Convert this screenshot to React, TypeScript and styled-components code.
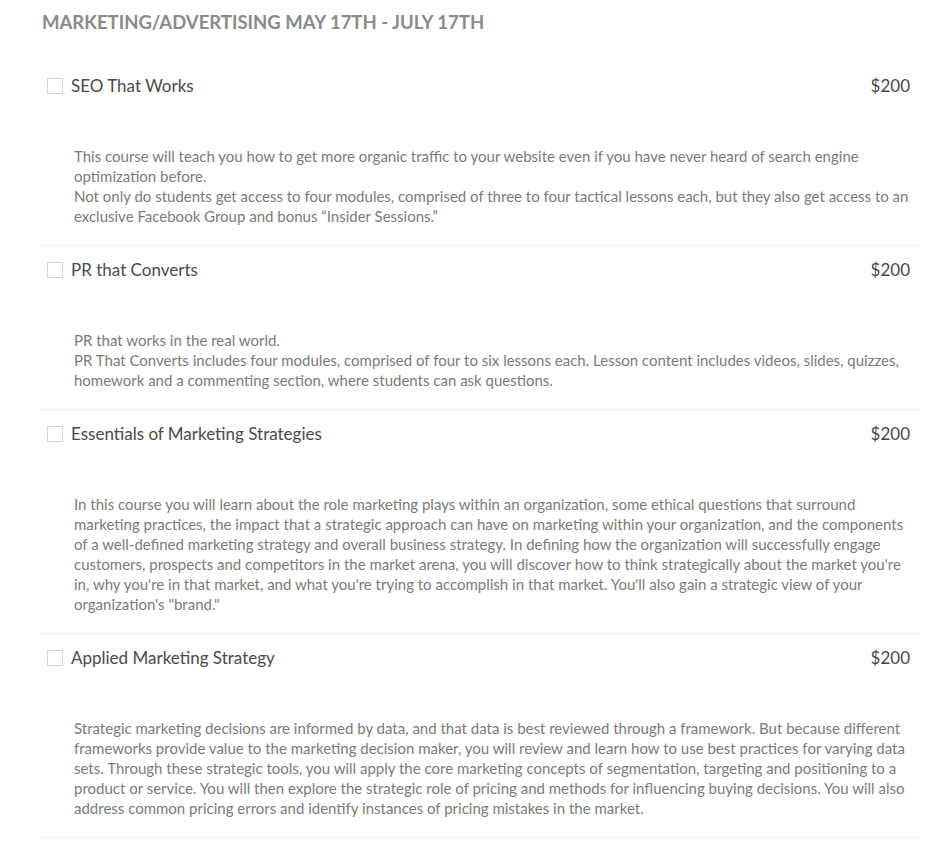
import styled, { createGlobalStyle } from "styled-components";

const GlobalStyle = createGlobalStyle`
  body {
    margin: 0;
    background: #fff;
    font-family: Lato, "Open Sans", sans-serif;
  }
`;

type Course = {
  title: string;
  price: string;
  lines: string[];
};

const courses: Course[] = [
  {
    title: "SEO That Works",
    price: "$200",
    lines: [
      "This course will teach you how to get more organic traffic to your website even if you have never heard of search engine optimization before.",
      "Not only do students get access to four modules, comprised of three to four tactical lessons each, but they also get access to an exclusive Facebook Group and bonus \u201cInsider Sessions.\u201d",
    ],
  },
  {
    title: "PR that Converts",
    price: "$200",
    lines: [
      "PR that works in the real world.",
      "PR That Converts includes four modules, comprised of four to six lessons each. Lesson content includes videos, slides, quizzes, homework and a commenting section, where students can ask questions.",
    ],
  },
  {
    title: "Essentials of Marketing Strategies",
    price: "$200",
    lines: [
      "In this course you will learn about the role marketing plays within an organization, some ethical questions that surround marketing practices, the impact that a strategic approach can have on marketing within your organization, and the components of a well-defined marketing strategy and overall business strategy. In defining how the organization will successfully engage customers, prospects and competitors in the market arena, you will discover how to think strategically about the market you're in, why you're in that market, and what you're trying to accomplish in that market. You'll also gain a strategic view of your organization's \"brand.\"",
    ],
  },
  {
    title: "Applied Marketing Strategy",
    price: "$200",
    lines: [
      "Strategic marketing decisions are informed by data, and that data is best reviewed through a framework. But because different frameworks provide value to the marketing decision maker, you will review and learn how to use best practices for varying data sets. Through these strategic tools, you will apply the core marketing concepts of segmentation, targeting and positioning to a product or service. You will then explore the strategic role of pricing and methods for influencing buying decisions. You will also address common pricing errors and identify instances of pricing mistakes in the market.",
    ],
  },
];

const Page = styled.div`
  padding: 10px 31px 0 40px;
`;

const Heading = styled.h2`
  margin: 0 0 0 2px;
  font-size: 18.5px;
  line-height: 24px;
  font-weight: 700;
  color: #8a8a8a;
  text-transform: uppercase;
`;

const List = styled.div`
  margin-top: 28px;
  display: flex;
  flex-direction: column;
`;

const Row = styled.div<{ $first?: boolean }>`
  padding: 12px 10px 19px 7px;
  border-top: ${(p) => (p.$first ? "none" : "1px solid #ececec")};
  &:last-child {
    border-bottom: 1px solid #ececec;
  }
`;

const Header = styled.label`
  display: flex;
  align-items: center;
  gap: 8px;
  cursor: pointer;
`;

const Box = styled.input.attrs({ type: "checkbox" })`
  appearance: none;
  margin: 0;
  width: 16px;
  height: 16px;
  border: 1px solid #d4d4d4;
  background: #fff;
  flex: none;
`;

const Title = styled.span`
  flex: 1;
  font-size: 17px;
  line-height: 24px;
  color: #4a4a4a;
`;

const Price = styled.span`
  font-size: 17px;
  line-height: 24px;
  color: #4a4a4a;
`;

const Desc = styled.div`
  margin: 48px -8px 0 27px;
  font-size: 15px;
  line-height: 20px;
  color: #7b7b7b;

  p {
    margin: 0;
  }
`;

export default function App() {
  return (
    <Page>
      <GlobalStyle />
      <Heading>Marketing/Advertising May 17th - July 17th</Heading>
      <List>
        {courses.map((c, i) => (
          <Row key={c.title} $first={i === 0}>
            <Header>
              <Box />
              <Title>{c.title}</Title>
              <Price>{c.price}</Price>
            </Header>
            <Desc>
              {c.lines.map((l) => (
                <p key={l}>{l}</p>
              ))}
            </Desc>
          </Row>
        ))}
      </List>
    </Page>
  );
}
